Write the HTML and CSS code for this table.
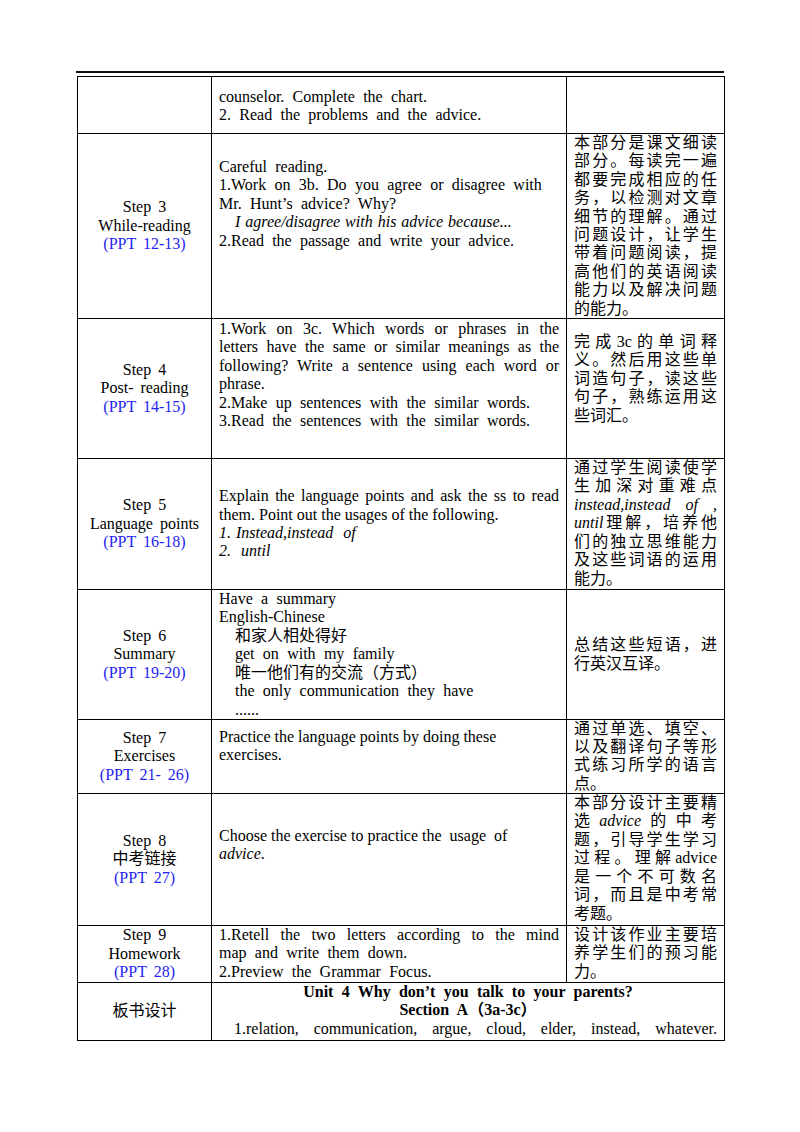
FILE: index.html
```html
<!DOCTYPE html>
<html lang="zh-CN">
<head>
  <meta charset="UTF-8" />
  <title>Unit 4 Section A 3a-3c</title>
  <link rel="stylesheet" href="styles.css">
</head>
<body>

  <div class="page">
    <div class="rule"></div>

    <table class="plan">
      <colgroup>
        <col class="c1">
        <col class="c2">
        <col class="c3">
      </colgroup>

      <!-- continued from previous page -->
      <tr class="r0">
        <td class="step"></td>
        <td class="mid pad-2">
          <span class="ln">counselor. Complete the chart.</span>
          <span class="ln">2. Read the problems and the advice.</span>
        </td>
        <td></td>
      </tr>

      <!-- STEP 3 -->
      <tr class="r3">
        <td class="step">
          <span class="ln">Step 3</span>
          <span class="ln tight">While-reading</span>
          <span class="ln ppt">(PPT 12-13)</span>
        </td>
        <td class="pad-24">
          <span class="ln">Careful reading.</span>
          <span class="ln">1.Work on 3b. Do you agree or disagree with</span>
          <span class="ln">Mr. Hunt’s advice? Why?</span>
          <span class="ln in it">I agree/disagree with his advice because...</span>
          <span class="ln">2.Read the passage and write your advice.</span>
        </td>
        <td class="note">
          <span class="ln j">本部分是课文细读</span>
          <span class="ln j">部分。每读完一遍</span>
          <span class="ln j">都要完成相应的任</span>
          <span class="ln j">务，以检测对文章</span>
          <span class="ln j">细节的理解。通过</span>
          <span class="ln j">问题设计，让学生</span>
          <span class="ln j">带着问题阅读，提</span>
          <span class="ln j">高他们的英语阅读</span>
          <span class="ln j">能力以及解决问题</span>
          <span class="ln">的能力。</span>
        </td>
      </tr>

      <!-- STEP 4 -->
      <tr class="r4">
        <td class="step">
          <span class="ln">Step 4</span>
          <span class="ln">Post- reading</span>
          <span class="ln ppt">(PPT 14-15)</span>
        </td>
        <td class="pad-1">
          <span class="ln j tight">1.Work on 3c. Which words or phrases in the</span>
          <span class="ln j tight">letters have the same or similar meanings as the</span>
          <span class="ln j tight">following? Write a sentence using each word or</span>
          <span class="ln">phrase.</span>
          <span class="ln">2.Make up sentences with the similar words.</span>
          <span class="ln">3.Read the sentences with the similar words.</span>
        </td>
        <td class="note pad-14">
          <span class="ln j">完成3c的单词释</span>
          <span class="ln j">义。然后用这些单</span>
          <span class="ln j">词造句子，读这些</span>
          <span class="ln j">句子，熟练运用这</span>
          <span class="ln">些词汇。</span>
        </td>
      </tr>

      <!-- STEP 5 -->
      <tr class="r5">
        <td class="step">
          <span class="ln">Step 5</span>
          <span class="ln">Language points</span>
          <span class="ln ppt">(PPT 16-18)</span>
        </td>
        <td class="mid">
          <span class="ln j tight">Explain the language points and ask the ss to read</span>
          <span class="ln tight">them. Point out the usages of the following.</span>
          <span class="ln it tight">1. Instead,instead&nbsp; of</span>
          <span class="ln it tight">2.&nbsp; until</span>
        </td>
        <td class="note">
          <span class="ln j">通过学生阅读使学</span>
          <span class="ln j">生加深对重难点</span>
          <span class="ln j it">instead,instead of ,</span>
          <span class="ln j"><i>until</i>理解，培养他</span>
          <span class="ln j">们的独立思维能力</span>
          <span class="ln j">及这些词语的运用</span>
          <span class="ln">能力。</span>
        </td>
      </tr>

      <!-- STEP 6 -->
      <tr class="r6">
        <td class="step">
          <span class="ln">Step 6</span>
          <span class="ln">Summary</span>
          <span class="ln ppt">(PPT 19-20)</span>
        </td>
        <td>
          <span class="ln">Have a summary</span>
          <span class="ln">English-Chinese</span>
          <span class="ln in">和家人相处得好</span>
          <span class="ln in">get on with my family</span>
          <span class="ln in">唯一他们有的交流（方式）</span>
          <span class="ln in">the only communication they have</span>
          <span class="ln in">......</span>
        </td>
        <td class="note mid">
          <span class="ln j">总结这些短语，进</span>
          <span class="ln">行英汉互译。</span>
        </td>
      </tr>

      <!-- STEP 7 -->
      <tr class="r7">
        <td class="step">
          <span class="ln">Step 7</span>
          <span class="ln">Exercises</span>
          <span class="ln ppt">(PPT 21- 26)</span>
        </td>
        <td class="pad-8">
          <span class="ln tight">Practice the language points by doing these</span>
          <span class="ln tight">exercises.</span>
        </td>
        <td class="note snug">
          <span class="ln j">通过单选、填空、</span>
          <span class="ln j">以及翻译句子等形</span>
          <span class="ln j">式练习所学的语言</span>
          <span class="ln">点。</span>
        </td>
      </tr>

      <!-- STEP 8 -->
      <tr class="r8">
        <td class="step">
          <span class="ln">Step 8</span>
          <span class="ln">中考链接</span>
          <span class="ln ppt">(PPT 27)</span>
        </td>
        <td class="pad-33">
          <span class="ln tight">Choose the exercise to practice the&nbsp; usage&nbsp; of</span>
          <span class="ln"><i>advice</i>.</span>
        </td>
        <td class="note">
          <span class="ln j">本部分设计主要精</span>
          <span class="ln j">选<i>advice</i>的中考</span>
          <span class="ln j">题，引导学生学习</span>
          <span class="ln j">过程。理解advice</span>
          <span class="ln j">是一个不可数名</span>
          <span class="ln j">词，而且是中考常</span>
          <span class="ln">考题。</span>
        </td>
      </tr>

      <!-- STEP 9 -->
      <tr class="r9">
        <td class="step">
          <span class="ln">Step 9</span>
          <span class="ln">Homework</span>
          <span class="ln ppt">(PPT 28)</span>
        </td>
        <td>
          <span class="ln j">1.Retell the two letters according to the mind</span>
          <span class="ln">map and write them down.</span>
          <span class="ln">2.Preview the Grammar Focus.</span>
        </td>
        <td class="note">
          <span class="ln j">设计该作业主要培</span>
          <span class="ln j">养学生们的预习能</span>
          <span class="ln">力。</span>
        </td>
      </tr>

      <!-- BOARD DESIGN -->
      <tr class="r10">
        <td class="step">板书设计</td>
        <td colspan="2">
          <span class="ln head">Unit 4 Why don’t you talk to your parents?</span>
          <span class="ln head">Section A（3a-3c）</span>
          <span class="ln j in-s">1.relation, communication, argue, cloud, elder, instead, whatever.</span>
        </td>
      </tr>
    </table>
  </div>

</body>
</html>
```

FILE: styles.css
```css
body {
  margin: 0;
  background: #fff;
  color: #000;
  font-family: "Liberation Serif", "Noto Sans CJK SC", serif;
  font-size: 16px;
}
.page {
  width: 648px;
  margin-left: 76px;
  padding-top: 71px;
}
.rule {
  border-top: 2px solid #111;
  margin-bottom: 3px;
}
.plan {
  border-collapse: collapse;
  table-layout: fixed;
  width: 647px;
  margin-left: 1px;
}
.c1 { width: 134px; }
.c2 { width: 355px; }
.c3 { width: 158px; }
.plan td {
  border: 1px solid #000;
  padding: 0 7px;
  line-height: 18.4px;
  vertical-align: top;
  word-spacing: 4.3px;
  overflow: hidden;
}
.plan td.step {
  text-align: center;
  vertical-align: middle;
  padding: 0 4px;
  word-spacing: 3px;
}
.plan td.mid {
  vertical-align: middle;
}
.plan td.pad-1 { padding-top: 1px; }
.plan td.pad-2 { padding-top: 2px; }
.plan td.pad-8 { padding-top: 8px; }
.plan td.pad-14 { padding-top: 14px; }
.plan td.pad-24 { padding-top: 24px; }
.plan td.pad-33 { padding-top: 33px; }
.plan td.snug {
  line-height: 18.2px;
}
.note {
  font-size: 16px;
}
.r0 { height: 57px; }
.r3 { height: 185px; }
.r4 { height: 140px; }
.r5 { height: 131px; }
.r6 { height: 130px; }
.r7 { height: 74px; }
.r8 { height: 132px; }
.r9 { height: 57px; }
.r10 { height: 58px; }
.ln {
  display: block;
  white-space: nowrap;
}
.ln.j {
  text-align: justify;
  text-align-last: justify;
  white-space: normal;
}
.tight {
  word-spacing: 0;
}
.it {
  font-style: italic;
  word-spacing: 1px;
}
.in {
  padding-left: 16px;
}
.in-s {
  padding-left: 15px;
}
.ppt {
  color: #2424f2;
}
.head {
  text-align: center;
  font-weight: bold;
}
```
